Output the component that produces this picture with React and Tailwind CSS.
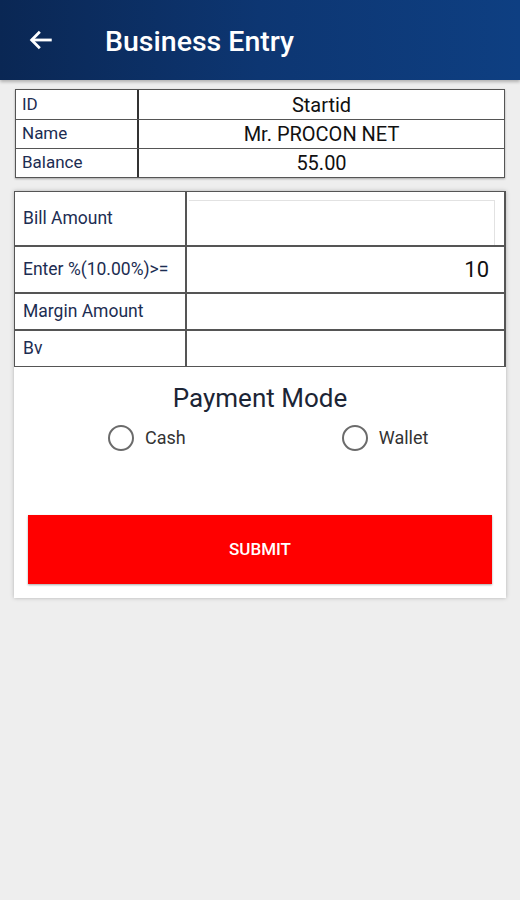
import React, { useState } from 'react';

const INFO = [
    { label: 'ID', value: 'Startid' },
    { label: 'Name', value: 'Mr. PROCON NET' },
    { label: 'Balance', value: '55.00' },
];

function Radio({ label, checked, onClick }) {
    return (
        <button onClick={onClick} className="flex items-center gap-[11px]">
            <span className="flex h-[26px] w-[26px] items-center justify-center rounded-full border-[2.5px] border-[#6b6b6b]">
                {checked && <span className="h-[12px] w-[12px] rounded-full bg-[#6b6b6b]" />}
            </span>
            <span className="text-[18px] text-[#333]">{label}</span>
        </button>
    );
}

export default function App() {
    const [mode, setMode] = useState(null);

    return (
        <div className="min-h-[900px] w-[520px] bg-[#eeeeee]" style={{ fontFamily: 'Roboto, "Liberation Sans", sans-serif' }}>
            <header className="flex h-[80px] items-center bg-gradient-to-r from-[#0a2754] via-[#0d3672] to-[#0e3f82] shadow-[0_2px_3px_rgba(0,0,0,0.25)]">
                <svg className="ml-[27px] h-[28px] w-[28px]" viewBox="0 0 24 24" fill="none" stroke="white" strokeWidth="2.4" strokeLinecap="square">
                    <path d="M20 12H5" />
                    <path d="M11 5l-7 7 7 7" strokeLinecap="butt" strokeLinejoin="miter" />
                </svg>
                <h1 className="ml-[50px] mt-[4px] text-[28.5px] font-medium text-white">Business Entry</h1>
            </header>

            <div className="px-[15px] pt-[9px]">
                <div className="border border-[#555] bg-white shadow-[0_1px_2px_rgba(0,0,0,0.3)]">
                    {INFO.map((row, i) => (
                        <div key={row.label} className={`flex h-[29px] ${i > 0 ? 'border-t border-[#555]' : ''}`}>
                            <div className="flex w-[123px] items-center border-r-2 border-[#333] pl-[6px] text-[17px] text-[#1c2d52]">{row.label}</div>
                            <div className="flex flex-1 items-center justify-center text-[20px] text-[#111]">{row.value}</div>
                        </div>
                    ))}
                </div>
            </div>

            <div className="mx-[14px] mt-[13px] bg-white shadow-[0_0_4px_rgba(0,0,0,0.25)]">
                <div className="border border-[#555] border-r-2">
                    <div className="flex h-[55px] border-b-2 border-[#555]">
                        <div className="flex w-[172px] items-center border-r-2 border-[#555] pl-[8px] text-[17.5px] text-[#1c2d52]">Bill Amount</div>
                        <div className="flex-1 pt-[8px] pr-[9px] pl-[2px]">
                            <div className="h-full border-r border-t border-[#e2e2e2]" />
                        </div>
                    </div>
                    <div className="flex h-[47px] border-b-2 border-[#555]">
                        <div className="flex w-[172px] items-center border-r-2 border-[#555] pl-[8px] text-[17.5px] text-[#1c2d52]">Enter %(10.00%)&gt;=</div>
                        <div className="flex flex-1 items-center justify-end pr-[15px] text-[22px] text-[#111]">10</div>
                    </div>
                    <div className="flex h-[37px] border-b-2 border-[#555]">
                        <div className="flex w-[172px] items-center border-r-2 border-[#555] pl-[8px] text-[17.5px] text-[#1c2d52]">Margin Amount</div>
                        <div className="flex-1" />
                    </div>
                    <div className="flex h-[35px]">
                        <div className="flex w-[172px] items-center border-r-2 border-[#555] pl-[8px] text-[17.5px] text-[#1c2d52]">Bv</div>
                        <div className="flex-1" />
                    </div>
                </div>

                <div className="flex flex-col items-center pt-[14px]">
                    <div className="text-[26px] leading-[34px] text-[#1c2535]">Payment Mode</div>
                    <div className="mt-[9px] flex w-full">
                        <div className="ml-[94px]">
                            <Radio label="Cash" checked={mode === 'cash'} onClick={() => setMode('cash')} />
                        </div>
                        <div className="ml-[156px]">
                            <Radio label="Wallet" checked={mode === 'wallet'} onClick={() => setMode('wallet')} />
                        </div>
                    </div>
                </div>

                <div className="px-[14px] pt-[64px] pb-[14px]">
                    <button className="flex h-[69px] w-full items-center justify-center bg-[#ff0000] text-[17px] font-medium text-white shadow-[0_1px_2px_rgba(0,0,0,0.35)]">
                        SUBMIT
                    </button>
                </div>
            </div>
        </div>
    );
}
